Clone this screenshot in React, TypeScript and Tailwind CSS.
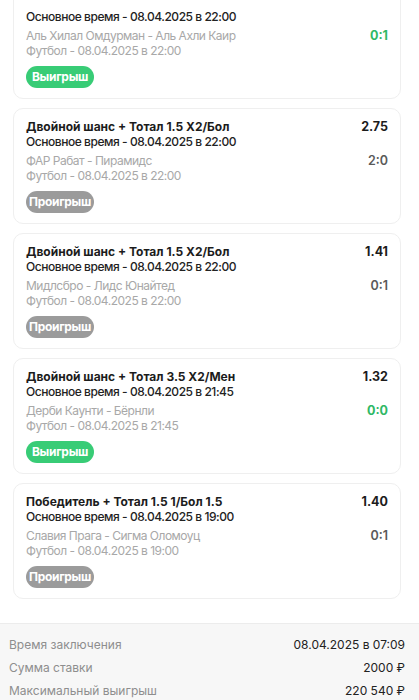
import React from "react";

type Bet = {
  title?: string;
  odds?: string;
  time: string;
  teams: string;
  score: string;
  scoreGreen?: boolean;
  sport: string;
  win: boolean;
};

const bets: Bet[] = [
  {
    time: "Основное время - 08.04.2025 в 22:00",
    teams: "Аль Хилал Омдурман - Аль Ахли Каир",
    score: "0:1",
    scoreGreen: true,
    sport: "Футбол - 08.04.2025 в 22:00",
    win: true,
  },
  {
    title: "Двойной шанс + Тотал 1.5 X2/Бол",
    odds: "2.75",
    time: "Основное время - 08.04.2025 в 22:00",
    teams: "ФАР Рабат - Пирамидс",
    score: "2:0",
    sport: "Футбол - 08.04.2025 в 22:00",
    win: false,
  },
  {
    title: "Двойной шанс + Тотал 1.5 X2/Бол",
    odds: "1.41",
    time: "Основное время - 08.04.2025 в 22:00",
    teams: "Мидлсбро - Лидс Юнайтед",
    score: "0:1",
    sport: "Футбол - 08.04.2025 в 22:00",
    win: false,
  },
  {
    title: "Двойной шанс + Тотал 3.5 X2/Мен",
    odds: "1.32",
    time: "Основное время - 08.04.2025 в 21:45",
    teams: "Дерби Каунти - Бёрнли",
    score: "0:0",
    scoreGreen: true,
    sport: "Футбол - 08.04.2025 в 21:45",
    win: true,
  },
  {
    title: "Победитель + Тотал 1.5 1/Бол 1.5",
    odds: "1.40",
    time: "Основное время - 08.04.2025 в 19:00",
    teams: "Славия Прага - Сигма Оломоуц",
    score: "0:1",
    sport: "Футбол - 08.04.2025 в 19:00",
    win: false,
  },
];

function Card({ b, first }: { b: Bet; first?: boolean }) {
  return (
    <div
      className={
        "ml-[13px] mr-[18px] rounded-[10px] border border-[#efefef] bg-white px-[12px] pb-[10px] flex flex-col " +
        (first ? "-mt-[12px] pt-[20px]" : "pt-[10px]")
      }
    >
      {b.title && (
        <div className="flex justify-between text-[12px] leading-[15px] font-bold text-[#1c1c1c]">
          <span>{b.title}</span>
          <span className="text-[12.5px]">{b.odds}</span>
        </div>
      )}
      <div className="text-[12px] leading-[15px] font-medium text-[#222] tracking-[-0.45px]">{b.time}</div>
      <div className="mt-[4px] flex justify-between text-[12px] leading-[15px]">
        <span className="text-[#a8a8a8] tracking-[-0.5px]">{b.teams}</span>
        <span className={b.scoreGreen ? "font-bold text-[12.5px] text-[#2fb866]" : "font-semibold text-[12.5px] text-[#5a5a5a]"}>{b.score}</span>
      </div>
      <div className="text-[12px] leading-[15px] text-[#a8a8a8] tracking-[-0.5px]">{b.sport}</div>
      <div className="mt-[8px] flex">
        <span
          className={
            "h-[22px] w-[68px] rounded-full flex items-center justify-center text-[12px] font-bold text-white tracking-[-0.3px] " +
            (b.win ? "bg-[#38cc76]" : "bg-[#9b9b9b]")
          }
        >
          {b.win ? "Выигрыш" : "Проигрыш"}
        </span>
      </div>
    </div>
  );
}

export default function App() {
  return (
    <div className="w-[419px] h-[700px] overflow-hidden bg-white" style={{ fontFamily: "Inter, 'Noto Sans', sans-serif" }}>
      <div className="-mt-[0px] flex flex-col gap-[9px]">
        {bets.map((b, i) => (
          <Card key={i} b={b} first={i === 0} />
        ))}
      </div>
      <div className="mt-[24px] border-t border-[#ececec] bg-[#f7f7f7] pt-[9px] pl-[9px] pr-[14px] text-[12px]">
        <div className="h-[23px] flex items-center justify-between">
          <span className="text-[#8e8e8e]">Время заключения</span>
          <span className="text-[#222]">08.04.2025 в 07:09</span>
        </div>
        <div className="h-[23px] flex items-center justify-between">
          <span className="text-[#8e8e8e]">Сумма ставки</span>
          <span className="text-[#222]">2000 ₽</span>
        </div>
        <div className="h-[23px] flex items-center justify-between">
          <span className="text-[#8e8e8e]">Максимальный выигрыш</span>
          <span className="text-[#222]">220 540 ₽</span>
        </div>
      </div>
    </div>
  );
}
